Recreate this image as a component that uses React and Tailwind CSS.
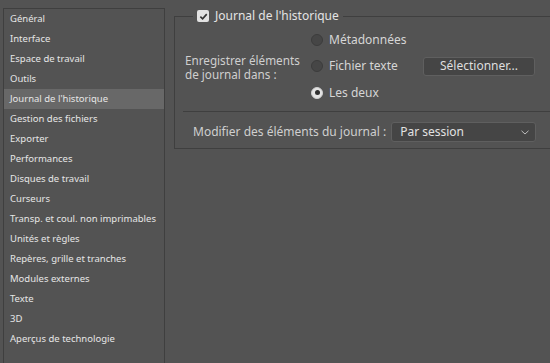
import React from "react";

const items = [
  "Général",
  "Interface",
  "Espace de travail",
  "Outils",
  "Journal de l'historique",
  "Gestion des fichiers",
  "Exporter",
  "Performances",
  "Disques de travail",
  "Curseurs",
  "Transp. et coul. non imprimables",
  "Unités et règles",
  "Repères, grille et tranches",
  "Modules externes",
  "Texte",
  "3D",
  "Aperçus de technologie",
];

function Radio({ checked }) {
  return (
    <span
      className={
        "w-[12px] h-[12px] shrink-0 rounded-full flex items-center justify-center border " +
        (checked ? "bg-[#e4e4e4] border-[#cfcfcf]" : "bg-[#464646] border-[#3c3c3c]")
      }
    >
      {checked && <span className="w-[5px] h-[5px] rounded-full bg-[#2e2e2e]" />}
    </span>
  );
}

export default function App() {
  return (
    <div
      className="w-[550px] h-[363px] bg-[#535353] flex overflow-hidden text-[#d6d6d6]"
      style={{ fontFamily: "'Noto Sans', 'Liberation Sans', sans-serif" }}
    >
      <div className="mt-[8px] ml-[3px] w-[162px] shrink-0 border-l border-t border-r border-[#3f3f3f] flex flex-col">
        {items.map((it, i) => (
          <div
            key={it}
            className={
              "h-[20px] pl-[6px] flex items-center text-[9.5px] text-[#e6e6e6] whitespace-nowrap " +
              (i === 4 ? "bg-[#686868]" : "")
            }
          >
            {it}
          </div>
        ))}
      </div>

      <fieldset className="ml-[9px] mt-[8px] h-[141px] w-[400px] shrink-0 border-t border-l border-b border-[#3f3f3f] text-[12px]">
        <legend className="ml-[18px] px-[4px] h-[16px] flex items-center gap-[6px] text-[#e4e4e4]">
          <span className="w-[12px] h-[12px] rounded-[2px] bg-[#e2e2e2] flex items-center justify-center">
            <svg width="9" height="9" viewBox="0 0 10 10">
              <path d="M1.5 5.2 L4 7.6 L8.6 2.4" fill="none" stroke="#333" strokeWidth="1.8" />
            </svg>
          </span>
          <span>Journal de l'historique</span>
        </legend>

        <div className="flex pt-[3px]">
          <div className="w-[136px] pl-[10px] flex items-center leading-[14px] text-[11.7px] text-[#cfcfcf]">
            <span>
              Enregistrer éléments
              <br />
              de journal dans :
            </span>
          </div>
          <div className="w-[224px] flex flex-col">
            <div className="h-[26px] flex items-center gap-[6px]">
              <Radio />
              <span>Métadonnées</span>
            </div>
            <div className="h-[26px] flex items-center gap-[6px]">
              <Radio />
              <span>Fichier texte</span>
              <div className="ml-auto w-[112px] h-[19px] rounded-[3px] bg-[#454545] border border-[#5f5f5f] flex items-center justify-center text-[#dedede]">
                Sélectionner...
              </div>
            </div>
            <div className="h-[27px] flex items-center gap-[6px]">
              <Radio checked />
              <span>Les deux</span>
            </div>
          </div>
        </div>

        <div className="ml-[8px] mt-[5px] border-t border-[#3f3f3f]" />

        <div className="flex items-center pl-[18px] pt-[10px] gap-[5px]">
          <span className="text-[#cfcfcf]">Modifier des éléments du journal :</span>
          <div className="w-[145px] h-[20px] rounded-[3px] bg-[#454545] border border-[#5f5f5f] flex items-center pl-[8px] pr-[6px] text-[#e2e2e2]">
            <span className="flex-1">Par session</span>
            <svg width="8" height="5" viewBox="0 0 8 5">
              <path d="M0.5 0.8 L4 4 L7.5 0.8" fill="none" stroke="#bdbdbd" strokeWidth="1" />
            </svg>
          </div>
        </div>
      </fieldset>
    </div>
  );
}
